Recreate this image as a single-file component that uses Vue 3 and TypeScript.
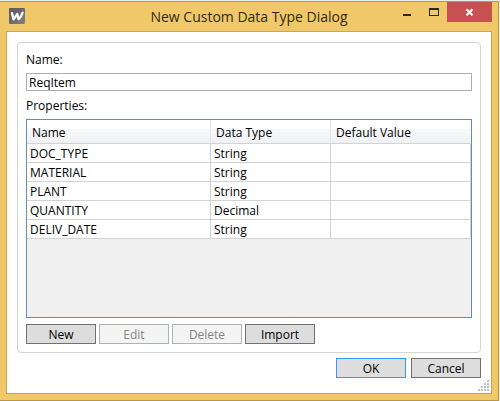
<script setup lang="ts">
import { ref } from 'vue'

interface Property {
  name: string
  dataType: string
  defaultValue: string
}

const typeName = ref('ReqItem')
const properties = ref<Property[]>([
  { name: 'DOC_TYPE', dataType: 'String', defaultValue: '' },
  { name: 'MATERIAL', dataType: 'String', defaultValue: '' },
  { name: 'PLANT', dataType: 'String', defaultValue: '' },
  { name: 'QUANTITY', dataType: 'Decimal', defaultValue: '' },
  { name: 'DELIV_DATE', dataType: 'String', defaultValue: '' },
])

const actions = [
  { label: 'New', disabled: false },
  { label: 'Edit', disabled: true },
  { label: 'Delete', disabled: true },
  { label: 'Import', disabled: false },
]

const gripDots = [
  [9, 0],
  [6, 3], [9, 3],
  [3, 6], [6, 6], [9, 6],
  [0, 9], [3, 9], [6, 9], [9, 9],
]
</script>

<template>
  <div class="window">
    <header class="titlebar">
      <svg class="logo" viewBox="0 0 16 16" aria-hidden="true">
        <defs>
          <linearGradient id="logo-fill" x1="0" y1="0" x2="1" y2="1">
            <stop offset="0" stop-color="#5c5c60" />
            <stop offset="0.5" stop-color="#69696d" />
            <stop offset="1" stop-color="#858588" />
          </linearGradient>
        </defs>
        <rect width="16" height="16" rx="1" fill="url(#logo-fill)" />
        <path d="M3 5.2 L4.6 11.4 L8.3 6 L9.6 11.2 Q12.6 9 13.6 4.6" fill="none" stroke="#fff" stroke-width="2.3" stroke-linejoin="round" stroke-linecap="round" />
      </svg>
      <h1 class="title">New Custom Data Type Dialog</h1>
      <div class="controls">
        <button type="button" class="control" aria-label="Minimize">
          <svg width="10" height="10" viewBox="0 0 10 10"><path d="M0 7h8v2H0z" fill="#262626" /></svg>
        </button>
        <button type="button" class="control" aria-label="Maximize">
          <svg width="10" height="10" viewBox="0 0 10 10"><path d="M0 1h10v8H0z M1 3v5h8V3z" fill="#262626" fill-rule="evenodd" /></svg>
        </button>
        <button type="button" class="control close" aria-label="Close">
          <svg width="9" height="8" viewBox="0 0 9 8"><path d="M1.5 1.2L7.5 7.2M7.5 1.2L1.5 7.2" stroke="#fff" stroke-width="2" /></svg>
        </button>
      </div>
    </header>

    <main class="client">
      <section class="group">
        <label class="caption" for="type-name">Name:</label>
        <input id="type-name" v-model="typeName" class="textbox" type="text" />
        <p id="properties-label" class="caption second">Properties:</p>
        <div class="grid">
          <table aria-labelledby="properties-label">
            <colgroup>
              <col class="col-name" />
              <col class="col-type" />
              <col />
            </colgroup>
            <thead>
              <tr><th>Name</th><th>Data Type</th><th>Default Value</th></tr>
            </thead>
            <tbody>
              <tr v-for="p in properties" :key="p.name">
                <td>{{ p.name }}</td>
                <td>{{ p.dataType }}</td>
                <td>{{ p.defaultValue }}</td>
              </tr>
            </tbody>
          </table>
        </div>
        <div class="actions">
          <button v-for="a in actions" :key="a.label" type="button" class="button" :disabled="a.disabled">{{ a.label }}</button>
        </div>
      </section>

      <footer class="footer">
        <button type="button" class="button default">OK</button>
        <button type="button" class="button">Cancel</button>
      </footer>
      <svg class="grip" width="12" height="12" viewBox="0 0 12 12" aria-hidden="true">
        <g v-for="([x, y], i) in gripDots" :key="i">
          <rect :x="x + 1" :y="y + 1" width="1" height="1" fill="#e4e6ee" />
          <rect :x="x" :y="y" width="2" height="2" fill="#b9bfd2" />
        </g>
      </svg>
    </main>
  </div>
</template>

<style>
body {
  margin: 0;
  background: #ebebeb;
}
</style>

<style scoped>
* {
  box-sizing: border-box;
}

.window {
  display: flex;
  flex-direction: column;
  min-height: calc(100vh - 1px);
  margin: 1px 1px 0 0;
  padding: 0 6px 6px;
  border: solid #b8964a;
  border-width: 1px 1px 1px 0;
  background: #f0c869;
  font-family: "Open Sans", "Noto Sans", sans-serif;
  font-size: 12px;
  line-height: 16px;
  color: #000;
}

.titlebar {
  display: grid;
  grid-template-columns: 1fr auto 1fr;
  align-items: start;
  height: 29px;
}

.logo {
  width: 16px;
  height: 16px;
  margin: 6px 0 0 3px;
}

.title {
  margin: 5px 0 0;
  font-size: 14px;
  line-height: 20px;
  font-weight: 400;
  color: #2f2a1c;
  white-space: nowrap;
}

.controls {
  display: flex;
  justify-content: flex-end;
}

.control {
  display: flex;
  align-items: center;
  justify-content: center;
  width: 26px;
  height: 20px;
  padding: 0;
  border: 0;
  background: transparent;
}

.close {
  width: 45px;
  background: #c75050;
}

.client {
  position: relative;
  display: flex;
  flex: 1;
  flex-direction: column;
  padding: 10px;
  border: 1px solid #cba652;
  background: #fff;
}

.group {
  display: flex;
  flex: 1;
  flex-direction: column;
  padding: 8px;
  border: 1px solid #d5d5d5;
  border-radius: 4px;
}

.caption {
  margin: 0;
  height: 22px;
  padding-top: 1px;
}

.second {
  margin-top: 6px;
}

.textbox {
  width: 100%;
  height: 18px;
  padding: 1px 2px 0;
  border: 1px solid #abadb3;
  background: #fff;
  font: inherit;
  color: inherit;
  outline: none;
}

.grid {
  flex: 1;
  border: 1px solid #688caf;
  background: #f0f0f0;
}

table {
  width: 100%;
  border-collapse: separate;
  border-spacing: 0;
  table-layout: fixed;
}

.col-name {
  width: 184px;
}

.col-type {
  width: 120px;
}

th,
td {
  border: solid #d3d3d3;
  border-width: 0 1px 1px 0;
  text-align: left;
  font-weight: 400;
}

th {
  height: 24px;
  padding: 3px 5px 0;
  border-right-color: #e3e5e7;
  background: linear-gradient(#fff 0 40%, #f7f8fa 41%, #f0f1f3 100%);
}

th:last-child {
  border-right-color: #f4f5f6;
}

td {
  height: 19px;
  padding: 2px 3px 0;
  background: #fff;
}

.actions {
  display: flex;
  gap: 3px;
  margin-top: 6px;
}

.button {
  width: 70px;
  height: 20px;
  padding: 2px 0 0;
  border: 1px solid #707070;
  background: #ddd;
  font: inherit;
  color: #000;
}

.button:disabled {
  border-color: #adb2b5;
  background: #f4f4f4;
  color: #838383;
}

.default {
  border-color: #3399ff;
}

.footer {
  display: flex;
  justify-content: flex-end;
  gap: 5px;
  margin: 5px 0;
}

.grip {
  position: absolute;
  right: 1px;
  bottom: 1px;
}
</style>
